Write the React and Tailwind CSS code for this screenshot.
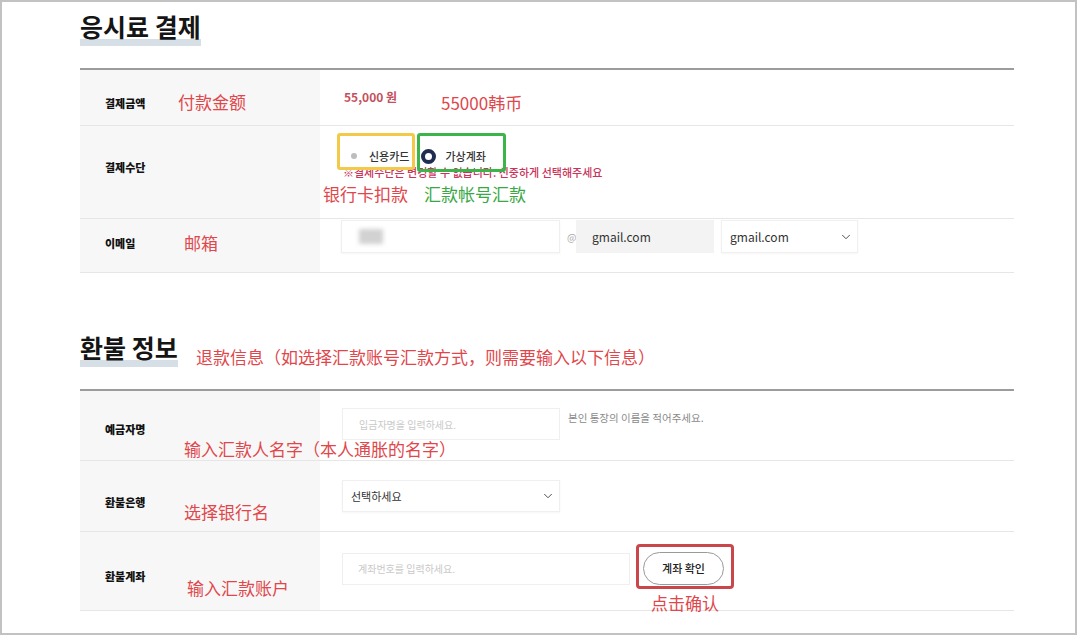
import React from "react";
import { ChevronDown } from "lucide-react";

const kr = { fontFamily: '"Noto Sans CJK KR", "Noto Sans", sans-serif' };
const cn = { fontFamily: '"Noto Sans CJK SC", "Noto Sans", sans-serif' };

// red / green notes written over the screenshot
function Note({ children, className = "", green = false }) {
  return (
    <span
      style={cn}
      className={`absolute whitespace-nowrap text-[17px] leading-[22px] ${green ? "text-[#3aa845]" : "text-[#e0474c]"} ${className}`}
    >
      {children}
    </span>
  );
}

function Title({ children }) {
  return (
    <h2
      style={kr}
      className="inline-block text-[25px] leading-[34px] font-bold text-[#151515] pb-[3px] bg-[linear-gradient(transparent_80%,#d6dee6_80%)]"
    >
      {children}
    </h2>
  );
}

function Row({ label, h, pt, children, notes }) {
  return (
    <div className={`relative flex border-b border-[#e6e6e6] ${h}`}>
      <div className={`w-[240px] shrink-0 bg-[#f7f7f7] pl-[25px] ${pt}`}>
        <span className="text-[11px] leading-[16px] font-black text-[#111]">{label}</span>
      </div>
      <div className="flex-1 relative">{children}</div>
      {notes}
    </div>
  );
}

export default function App() {
  return (
    <div style={kr} className="w-[1077px] h-[635px] border-2 border-[#c2c2c2] bg-white overflow-hidden">
      <div className="pl-[78px] pt-[7px] w-[1012px]">
        {/* 응시료 결제 */}
        <Title>응시료 결제</Title>
        <div className="mt-[22px] border-t-2 border-[#9c9c9c]">
          <Row
            label="결제금액"
            h="h-[56px]"
            pt="pt-[19px]"
            notes={
              <>
                <Note className="left-[98px] top-[21px]">付款金额</Note>
                <Note className="left-[361px] top-[22px]">55000韩币</Note>
              </>
            }
          >
            <div className="pl-[24px] pt-[19px] text-[12px] leading-[16px] font-semibold text-[#c4505c]">
              55,000 원
            </div>
          </Row>

          <Row
            label="결제수단"
            h="h-[93px]"
            pt="pt-[27px]"
            notes={
              <>
                <Note className="left-[243px] top-[57px]">银行卡扣款</Note>
                <Note green className="left-[344px] top-[57px]">汇款帐号汇款</Note>
              </>
            }
          >
            <div className="pl-[23px] pt-[21px]">
              <div className="flex items-center h-[18px] pl-[8px] text-[11px] text-[#333] font-medium">
                <span className="w-[6px] h-[6px] rounded-full bg-[#bdbdbd]" />
                <span className="ml-[12px]">신용카드</span>
                <span className="ml-[12px] w-[15px] h-[15px] rounded-full border-[4px] border-[#1f2d50] bg-white" />
                <span className="ml-[9px]">가상계좌</span>
              </div>
              <p className="text-[11px] leading-[14px] text-[#c8345a] font-medium">
                ※결제수단은 변경할 수 없습니다. 신중하게 선택해주세요
              </p>
            </div>
            <div className="absolute left-[17px] top-[7px] w-[78px] h-[37px] border-[3px] border-[#f3c94a] rounded-[3px]" />
            <div className="absolute left-[97px] top-[7px] w-[89px] h-[39px] border-[3px] border-[#3bb54a] rounded-[3px]" />
          </Row>

          <Row
            label="이메일"
            h="h-[54px]"
            pt="pt-[10px]"
            notes={<Note className="left-[104px] top-[13px]">邮箱</Note>}
          >
            <div className="flex items-center pl-[21px] pt-[1px] text-[12px] text-[#333]">
              <div className="w-[219px] h-[33px] border border-[#efefef] shadow-[0_1px_2px_rgba(0,0,0,0.04)] flex items-center pl-[17px]">
                <div className="w-[24px] h-[15px] bg-[#d2d2d2] blur-[2px]" />
              </div>
              <span className="ml-[7px] w-[8px] text-[10px] text-[#aaa]">@</span>
              <div className="ml-[1px] w-[138px] h-[33px] bg-[#f3f3f3] flex items-center pl-[16px]">gmail.com</div>
              <div className="ml-[7px] w-[137px] h-[33px] border border-[#f0f0f0] shadow-[0_1px_2px_rgba(0,0,0,0.04)] flex items-center justify-between pl-[8px] pr-[4px]">
                gmail.com
                <ChevronDown size={14} strokeWidth={1.6} className="text-[#444]" />
              </div>
            </div>
          </Row>
        </div>

        {/* 환불 정보 */}
        <div className="relative mt-[57px]">
          <Title>환불 정보</Title>
          <Note className="left-[116px] top-[16px]">退款信息（如选择汇款账号汇款方式，则需要输入以下信息）</Note>
        </div>
        <div className="mt-[22px] border-t-2 border-[#9c9c9c]">
          <Row
            label="예금자명"
            h="h-[70px]"
            pt="pt-[24px]"
            notes={<Note className="left-[104px] top-[47px]">输入汇款人名字（本人通胀的名字）</Note>}
          >
            <div className="flex items-start pl-[22px] pt-[17px]">
              <div className="w-[218px] h-[32px] border border-[#efefef] flex items-center pl-[16px] text-[10px] text-[#c9c9c9]">
                입금자명을 입력하세요.
              </div>
              <span className="ml-[8px] mt-[2px] text-[10.5px] leading-[16px] text-[#8a8a8a]">
                본인 통장의 이름을 적어주세요.
              </span>
            </div>
          </Row>

          <Row
            label="환불은행"
            h="h-[71px]"
            pt="pt-[27px]"
            notes={<Note className="left-[104px] top-[40px]">选择银行名</Note>}
          >
            <div className="pl-[22px] pt-[19px]">
              <div className="w-[218px] h-[32px] border border-[#efefef] shadow-[0_1px_2px_rgba(0,0,0,0.04)] flex items-center justify-between pl-[8px] pr-[4px] text-[11px] text-[#333]">
                선택하세요
                <ChevronDown size={14} strokeWidth={1.6} className="text-[#444]" />
              </div>
            </div>
          </Row>

          <Row
            label="환불계좌"
            h="h-[79px]"
            pt="pt-[30px]"
            notes={
              <>
                <Note className="left-[107px] top-[45px]">输入汇款账户</Note>
                <Note className="left-[571px] top-[60px]">点击确认</Note>
                <div className="absolute left-[556px] top-[12px] w-[98px] h-[45px] border-[3px] border-[#c9464b] rounded-[4px]" />
              </>
            }
          >
            <div className="flex items-center pl-[22px] pt-[20px]">
              <div className="w-[288px] h-[32px] border border-[#efefef] flex items-center pl-[15px] text-[10px] text-[#c9c9c9]">
                계좌번호를 입력하세요.
              </div>
              <button className="ml-[13px] w-[81px] h-[33px] rounded-full border border-[#9a9a9a] bg-white text-[11px] text-[#222] font-medium">
                계좌 확인
              </button>
            </div>
          </Row>
        </div>
      </div>
    </div>
  );
}
